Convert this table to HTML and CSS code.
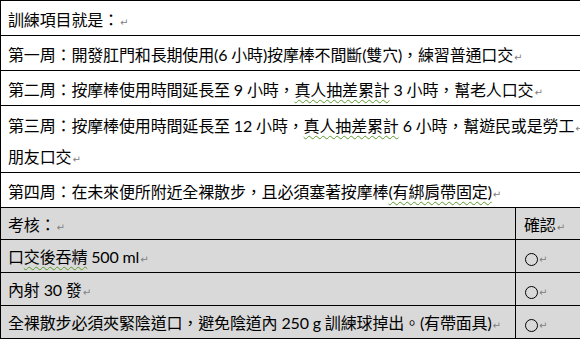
FILE: index.html
```html
<!DOCTYPE html>
<html lang="zh-Hant">
<head>
<meta charset="utf-8">
<title>訓練項目</title>
<link rel="stylesheet" href="styles.css">
</head>
<body>
<table class="doc">
  <colgroup>
    <col class="c-main">
    <col class="c-check">
  </colgroup>
  <tbody>
    <tr class="top">
      <td colspan="2">訓練項目就是：<span class="pm">↵</span></td>
    </tr>
    <tr class="top">
      <td colspan="2">第一周：開發肛門和長期使用(6 小時)按摩棒不間斷(雙穴)，練習普通口交<span class="pm">↵</span></td>
    </tr>
    <tr class="top">
      <td colspan="2">第二周：按摩棒使用時間延長至 9 小時，<span class="gr">真人抽差累計</span> 3 小時，幫老人口交<span class="pm">↵</span></td>
    </tr>
    <tr class="top two">
      <td colspan="2">第三周：按摩棒使用時間延長至 12 小時，<span class="gr">真人抽差累計</span> 6 小時，幫遊民或是勞工<span class="pm">↵</span><br>朋友口交<span class="pm">↵</span></td>
    </tr>
    <tr class="top">
      <td colspan="2">第四周：在未來便所附近全裸散步，且必須塞著按摩棒<span class="gr">(有綁肩帶固定)</span><span class="pm">↵</span></td>
    </tr>
    <tr class="gray head">
      <td>考核：<span class="pm">↵</span></td>
      <td class="chk">確認<span class="pm">↵</span></td>
    </tr>
    <tr class="gray">
      <td>口<span class="gr">交後吞精</span> 500 ml<span class="pm">↵</span></td>
      <td class="chk"><span class="circle"></span><span class="pm">↵</span></td>
    </tr>
    <tr class="gray">
      <td>內射 30 發<span class="pm">↵</span></td>
      <td class="chk"><span class="circle"></span><span class="pm">↵</span></td>
    </tr>
    <tr class="gray">
      <td>全裸散步必須夾緊陰道口，避免陰道內 250 g 訓練球掉出。(有帶面具)<span class="pm">↵</span></td>
      <td class="chk"><span class="circle"></span><span class="pm">↵</span></td>
    </tr>
  </tbody>
</table>
</body>
</html>
```

FILE: styles.css
```css
html, body {
  margin: 0;
  padding: 0;
  background: #ffffff;
  overflow: hidden;
}

body {
  width: 580px;
  height: 343px;
  font-family: Lato, "Noto Sans CJK TC", sans-serif;
  font-size: 16px;
  color: #000;
}

.doc {
  border-collapse: collapse;
  table-layout: fixed;
  width: 596px;
}

.c-main { width: 515px; }
.c-check { width: 81px; }

.doc td {
  border: 1px solid #000;
  padding: 4px 7px 0;
  line-height: 30px;
  height: 30px;
  white-space: nowrap;
  overflow: hidden;
  vertical-align: top;
  letter-spacing: -0.15px;
}

.doc tr.two td {
  line-height: 31px;
}

.doc tr.gray td {
  background: #d9d9d9;
  padding-top: 1px;
  line-height: 31px;
  height: 31px;
}

.doc tr.gray.head td {
  padding-top: 2px;
  line-height: 29px;
  height: 29px;
}

.doc td.chk {
  padding-left: 8px;
}

.pm {
  font-family: "DejaVu Sans", sans-serif;
  font-size: 10px;
  line-height: 0;
  color: #808080;
  margin-left: 1px;
  letter-spacing: 0;
}

.gr {
  text-decoration: underline wavy #5b9b2e;
  text-decoration-thickness: 1px;
  text-underline-offset: 3px;
}

.circle {
  display: inline-block;
  width: 11px;
  height: 11px;
  border: 1px solid #000;
  border-radius: 50%;
  margin-left: 1px;
  vertical-align: -3px;
}
```
